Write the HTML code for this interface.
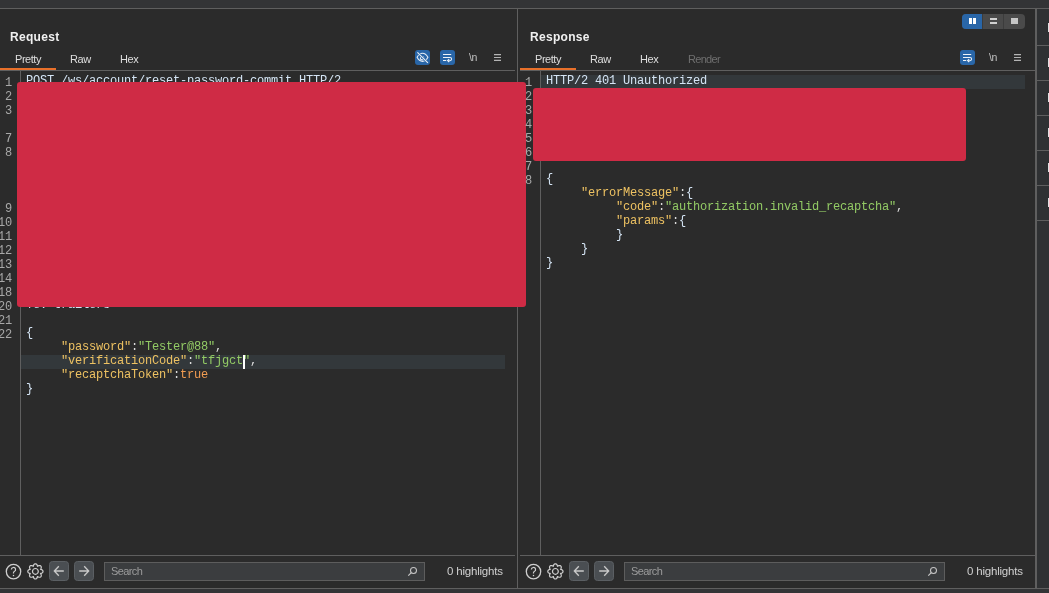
<!DOCTYPE html>
<html><head><meta charset="utf-8">
<style>
*{margin:0;padding:0;box-sizing:border-box}
html,body{width:1049px;height:593px;overflow:hidden;background:#2b2b2b;font-family:"Liberation Sans",sans-serif}
.a{position:absolute}
.title,.tab,.code,.num,.srch,.hl,.nl{will-change:transform}
.ln{background:#5f5f5f}
.panel{position:absolute;top:0;width:515px;height:593px}
.title{position:absolute;left:10px;top:30px;font-weight:bold;font-size:12px;color:#f0f0f0;letter-spacing:0.3px;line-height:14px}
.tab{position:absolute;top:52px;font-size:11px;color:#dedede;letter-spacing:-0.45px;line-height:14px}
.code{position:absolute;left:26px;top:74px;font-family:"Liberation Mono",monospace;font-size:12px;letter-spacing:-0.2px;line-height:14px;white-space:pre;color:#d5e5f5}
.num{position:absolute;right:503px;top:76px;font-family:"Liberation Mono",monospace;font-size:12px;letter-spacing:-0.2px;line-height:14px;white-space:pre;color:#a8a8a8;text-align:right}
.k{color:#eec262}
.s{color:#93cb65}
.t{color:#f19c52}
.p{color:#dcdcdc}
.srch{left:111px;top:565px;font-size:11px;color:#9c9c9c;letter-spacing:-0.6px;line-height:13px}
.hl{left:447px;top:565px;font-size:11.5px;color:#d0d0d0;letter-spacing:-0.2px;line-height:13px}
.nl{font-size:10.5px;color:#c0c0c0;line-height:12px;letter-spacing:-0.5px}
</style></head><body>
<div class="a" style="left:0;top:0;width:1049px;height:8px;background:#333436"></div>
<div class="a ln" style="left:0;top:8px;width:1049px;height:1px"></div>
<div class="a ln" style="left:0;top:588px;width:1049px;height:1px"></div>
<div class="a" style="left:0;top:589px;width:1049px;height:4px;background:#333436"></div>
<div class="a" style="left:1037px;top:9px;width:12px;height:579px;background:#2f3133"></div>
<div class="a ln" style="left:1035px;top:9px;width:2px;height:579px"></div>
<div class="a ln" style="left:1037px;top:45px;width:12px;height:1px"></div>
<div class="a ln" style="left:1037px;top:80px;width:12px;height:1px"></div>
<div class="a ln" style="left:1037px;top:115px;width:12px;height:1px"></div>
<div class="a ln" style="left:1037px;top:150px;width:12px;height:1px"></div>
<div class="a ln" style="left:1037px;top:185px;width:12px;height:1px"></div>
<div class="a ln" style="left:1037px;top:220px;width:12px;height:1px"></div>
<div class="a" style="left:1048px;top:23px;width:1px;height:9px;background:#e0e0e0"></div>
<div class="a" style="left:1048px;top:58px;width:1px;height:9px;background:#e0e0e0"></div>
<div class="a" style="left:1048px;top:93px;width:1px;height:9px;background:#e0e0e0"></div>
<div class="a" style="left:1048px;top:128px;width:1px;height:9px;background:#e0e0e0"></div>
<div class="a" style="left:1048px;top:163px;width:1px;height:9px;background:#e0e0e0"></div>
<div class="a" style="left:1048px;top:198px;width:1px;height:9px;background:#e0e0e0"></div>

<div class="a ln" style="left:517px;top:9px;width:1px;height:579px"></div>

<div class="panel" style="left:0">
  <div class="title">Request</div>
  <div class="tab" style="left:15px">Pretty</div>
  <div class="tab" style="left:70px">Raw</div>
  <div class="tab" style="left:120px">Hex</div>
  <div class="a" style="left:0;top:68px;width:56px;height:2px;background:#e8702a"></div>
  <div class="a ln" style="left:0;top:70px;width:515px;height:1px"></div>
  
  <svg class="a" style="left:415px;top:50px" width="15" height="15" viewBox="0 0 15 15">
    <rect x="0" y="0" width="15" height="15" rx="3" fill="#2966a8"/>
    <path d="M2.1,7.3 C5,1.9 10,1.9 12.9,7.3 C10,12.7 5,12.7 2.1,7.3 Z" fill="none" stroke="#e8eef5" stroke-width="1.1"/>
    <circle cx="7.1" cy="8.2" r="1.7" fill="none" stroke="#e8eef5" stroke-width="1.1"/>
    <path d="M2.4,2.4 L12.9,12.9" stroke="#2966a8" stroke-width="2.2"/>
    <path d="M2.4,2.4 L12.9,12.9" stroke="#e8eef5" stroke-width="1.1"/>
  </svg>
  <svg class="a" style="left:440px;top:50px" width="15" height="15" viewBox="0 0 15 15">
    <rect x="0" y="0" width="15" height="15" rx="3" fill="#2966a8"/>
    <path d="M3,4.5 H11.2 M3,7.5 H10 A1.6,1.6 0 0 1 10,10.7 H8.2 M6.2,10.5 H3" fill="none" stroke="#eef3f8" stroke-width="1.05"/>
    <path d="M9.2,9.2 L7.6,10.6 L9.2,12" fill="none" stroke="#eef3f8" stroke-width="1.1"/>
  </svg>
  <div class="a nl" style="left:469px;top:51px">\n</div>
  <svg class="a" style="left:493px;top:52px" width="10" height="10" viewBox="493 52 10 10">
    <path d="M494,54.6 H501 M494,57.5 H501 M494,60.4 H501" stroke="#b4b4b4" stroke-width="1.1"/>
  </svg>
  <div class="a ln" style="left:20px;top:71px;width:1px;height:484px"></div>
  <div class="a" style="left:21px;top:355px;width:484px;height:14px;background:#33383b"></div>
  <div class="num">1
2
3

7
8



9
10
11
12
13
14
18
20
21
22</div>
  <div class="code">POST /ws/account/reset-password-commit HTTP/2















Te: trailers

{
     <span class="k">"password"</span><span class="p">:</span><span class="s">"Tester@88"</span><span class="p">,</span>
     <span class="k">"verificationCode"</span><span class="p">:</span><span class="s">"tfjgct"</span><span class="p">,</span>
     <span class="k">"recaptchaToken"</span><span class="p">:</span><span class="t">true</span>
}</div>
  <div class="a" style="left:243px;top:355px;width:2px;height:14px;background:#ffffff"></div>
  <div class="a" style="left:17px;top:82px;width:509px;height:225px;border-radius:3px;background:#cf2b45"></div>
  
  <div class="a ln" style="left:0;top:555px;width:515px;height:1px"></div>
  <svg class="a" style="left:0;top:556px" width="100" height="32" viewBox="0 556 100 32">
    <circle cx="13.5" cy="571.6" r="7.2" fill="none" stroke="#cfcfcf" stroke-width="1.3"/>
    <path d="M11.4,569.6 a2.1,2.1 0 1 1 2.9,1.9 c-0.6,0.3 -0.8,0.6 -0.8,1.3 v0.6" fill="none" stroke="#cfcfcf" stroke-width="1.2"/>
    <rect x="12.85" y="574.9" width="1.3" height="1.3" fill="#cfcfcf"/>
    <g transform="translate(35.4,571.4)"><path d="M7.60,0.00 L7.58,0.24 L7.53,0.47 L7.44,0.70 L7.31,0.92 L7.15,1.13 L6.96,1.33 L6.74,1.51 L6.49,1.67 L6.21,1.80 L5.90,1.92 L5.55,2.00 L5.16,2.04 L5.09,2.20 L5.34,2.51 L5.52,2.81 L5.66,3.11 L5.76,3.41 L5.83,3.70 L5.86,3.98 L5.86,4.26 L5.82,4.52 L5.76,4.76 L5.66,4.99 L5.53,5.19 L5.37,5.37 L5.19,5.53 L4.99,5.66 L4.76,5.76 L4.52,5.82 L4.26,5.86 L3.98,5.86 L3.70,5.83 L3.41,5.76 L3.11,5.66 L2.81,5.52 L2.51,5.34 L2.20,5.09 L2.04,5.16 L2.00,5.55 L1.92,5.90 L1.80,6.21 L1.67,6.49 L1.51,6.74 L1.33,6.96 L1.13,7.15 L0.92,7.31 L0.70,7.44 L0.47,7.53 L0.24,7.58 L0.00,7.60 L-0.24,7.58 L-0.47,7.53 L-0.70,7.44 L-0.92,7.31 L-1.13,7.15 L-1.33,6.96 L-1.51,6.74 L-1.67,6.49 L-1.80,6.21 L-1.92,5.90 L-2.00,5.55 L-2.04,5.16 L-2.20,5.09 L-2.51,5.34 L-2.81,5.52 L-3.11,5.66 L-3.41,5.76 L-3.70,5.83 L-3.98,5.86 L-4.26,5.86 L-4.52,5.82 L-4.76,5.76 L-4.99,5.66 L-5.19,5.53 L-5.37,5.37 L-5.53,5.19 L-5.66,4.99 L-5.76,4.76 L-5.82,4.52 L-5.86,4.26 L-5.86,3.98 L-5.83,3.70 L-5.76,3.41 L-5.66,3.11 L-5.52,2.81 L-5.34,2.51 L-5.09,2.20 L-5.16,2.04 L-5.55,2.00 L-5.90,1.92 L-6.21,1.80 L-6.49,1.67 L-6.74,1.51 L-6.96,1.33 L-7.15,1.13 L-7.31,0.92 L-7.44,0.70 L-7.53,0.47 L-7.58,0.24 L-7.60,0.00 L-7.58,-0.24 L-7.53,-0.47 L-7.44,-0.70 L-7.31,-0.92 L-7.15,-1.13 L-6.96,-1.33 L-6.74,-1.51 L-6.49,-1.67 L-6.21,-1.80 L-5.90,-1.92 L-5.55,-2.00 L-5.16,-2.04 L-5.09,-2.20 L-5.34,-2.51 L-5.52,-2.81 L-5.66,-3.11 L-5.76,-3.41 L-5.83,-3.70 L-5.86,-3.98 L-5.86,-4.26 L-5.82,-4.52 L-5.76,-4.76 L-5.66,-4.99 L-5.53,-5.19 L-5.37,-5.37 L-5.19,-5.53 L-4.99,-5.66 L-4.76,-5.76 L-4.52,-5.82 L-4.26,-5.86 L-3.98,-5.86 L-3.70,-5.83 L-3.41,-5.76 L-3.11,-5.66 L-2.81,-5.52 L-2.51,-5.34 L-2.20,-5.09 L-2.04,-5.16 L-2.00,-5.55 L-1.92,-5.90 L-1.80,-6.21 L-1.67,-6.49 L-1.51,-6.74 L-1.33,-6.96 L-1.13,-7.15 L-0.92,-7.31 L-0.70,-7.44 L-0.47,-7.53 L-0.24,-7.58 L-0.00,-7.60 L0.24,-7.58 L0.47,-7.53 L0.70,-7.44 L0.92,-7.31 L1.13,-7.15 L1.33,-6.96 L1.51,-6.74 L1.67,-6.49 L1.80,-6.21 L1.92,-5.90 L2.00,-5.55 L2.04,-5.16 L2.20,-5.09 L2.51,-5.34 L2.81,-5.52 L3.11,-5.66 L3.41,-5.76 L3.70,-5.83 L3.98,-5.86 L4.26,-5.86 L4.52,-5.82 L4.76,-5.76 L4.99,-5.66 L5.19,-5.53 L5.37,-5.37 L5.53,-5.19 L5.66,-4.99 L5.76,-4.76 L5.82,-4.52 L5.86,-4.26 L5.86,-3.98 L5.83,-3.70 L5.76,-3.41 L5.66,-3.11 L5.52,-2.81 L5.34,-2.51 L5.09,-2.20 L5.16,-2.04 L5.55,-2.00 L5.90,-1.92 L6.21,-1.80 L6.49,-1.67 L6.74,-1.51 L6.96,-1.33 L7.15,-1.13 L7.31,-0.92 L7.44,-0.70 L7.53,-0.47 L7.58,-0.24 Z" fill="none" stroke="#cfcfcf" stroke-width="1.2" stroke-linejoin="round"/><circle cx="0" cy="0" r="2.9" fill="none" stroke="#cfcfcf" stroke-width="1.2"/></g>
    <rect x="49.5" y="561.5" width="19" height="19" rx="3" fill="#4a4e52" stroke="#5b5f63" stroke-width="1"/>
    <rect x="74.5" y="561.5" width="19" height="19" rx="3" fill="#4a4e52" stroke="#5b5f63" stroke-width="1"/>
    <path d="M63.8,571 H54.8 M58.8,566.2 L54.3,571 L58.8,575.8" fill="none" stroke="#c9c9c9" stroke-width="1.3"/>
    <path d="M79.2,571 H88.2 M84.2,566.2 L88.7,571 L84.2,575.8" fill="none" stroke="#c9c9c9" stroke-width="1.3"/>
  </svg>
  <div class="a" style="left:104px;top:562px;width:321px;height:19px;background:#3b3d3f;border:1px solid #5d5d5d"></div>
  <svg class="a" style="left:404px;top:563px" width="18" height="17" viewBox="404 563 18 17">
    <circle cx="413.5" cy="570.5" r="3" fill="none" stroke="#c4c4c4" stroke-width="1.05"/>
    <path d="M411.3,572.7 L408.3,575.7" stroke="#c4c4c4" stroke-width="1.2"/>
  </svg>
  <div class="a srch">Search</div>
  <div class="a hl">0 highlights</div>
</div>

<div class="panel" style="left:520px">
  <div class="title">Response</div>
  <div class="tab" style="left:15px">Pretty</div>
  <div class="tab" style="left:70px">Raw</div>
  <div class="tab" style="left:120px">Hex</div>
  <div class="tab" style="left:168px;color:#6f6f6f;letter-spacing:-0.7px">Render</div>
  <div class="a" style="left:0;top:68px;width:56px;height:2px;background:#e8702a"></div>
  <div class="a ln" style="left:0;top:70px;width:515px;height:1px"></div>
  
  <svg class="a" style="left:440px;top:50px" width="15" height="15" viewBox="0 0 15 15">
    <rect x="0" y="0" width="15" height="15" rx="3" fill="#2966a8"/>
    <path d="M3,4.5 H11.2 M3,7.5 H10 A1.6,1.6 0 0 1 10,10.7 H8.2 M6.2,10.5 H3" fill="none" stroke="#eef3f8" stroke-width="1.05"/>
    <path d="M9.2,9.2 L7.6,10.6 L9.2,12" fill="none" stroke="#eef3f8" stroke-width="1.1"/>
  </svg>
  <div class="a nl" style="left:469px;top:51px">\n</div>
  <svg class="a" style="left:493px;top:52px" width="10" height="10" viewBox="493 52 10 10">
    <path d="M494,54.6 H501 M494,57.5 H501 M494,60.4 H501" stroke="#b4b4b4" stroke-width="1.1"/>
  </svg>
  <div class="a ln" style="left:20px;top:71px;width:1px;height:484px"></div>
  <div class="a" style="left:21px;top:75px;width:484px;height:14px;background:#33383b"></div>
  <div class="num">1
2
3
4
5
6
7
8</div>
  <div class="code">HTTP/2 401 Unauthorized






{
     <span class="k">"errorMessage"</span><span class="p">:</span>{
          <span class="k">"code"</span><span class="p">:</span><span class="s">"authorization.invalid_recaptcha"</span><span class="p">,</span>
          <span class="k">"params"</span><span class="p">:</span>{
          }
     }
}</div>
  <div class="a" style="left:13px;top:88px;width:433px;height:73px;border-radius:3px;background:#cf2b45"></div>
  
  <div class="a ln" style="left:0;top:555px;width:515px;height:1px"></div>
  <svg class="a" style="left:0;top:556px" width="100" height="32" viewBox="0 556 100 32">
    <circle cx="13.5" cy="571.6" r="7.2" fill="none" stroke="#cfcfcf" stroke-width="1.3"/>
    <path d="M11.4,569.6 a2.1,2.1 0 1 1 2.9,1.9 c-0.6,0.3 -0.8,0.6 -0.8,1.3 v0.6" fill="none" stroke="#cfcfcf" stroke-width="1.2"/>
    <rect x="12.85" y="574.9" width="1.3" height="1.3" fill="#cfcfcf"/>
    <g transform="translate(35.4,571.4)"><path d="M7.60,0.00 L7.58,0.24 L7.53,0.47 L7.44,0.70 L7.31,0.92 L7.15,1.13 L6.96,1.33 L6.74,1.51 L6.49,1.67 L6.21,1.80 L5.90,1.92 L5.55,2.00 L5.16,2.04 L5.09,2.20 L5.34,2.51 L5.52,2.81 L5.66,3.11 L5.76,3.41 L5.83,3.70 L5.86,3.98 L5.86,4.26 L5.82,4.52 L5.76,4.76 L5.66,4.99 L5.53,5.19 L5.37,5.37 L5.19,5.53 L4.99,5.66 L4.76,5.76 L4.52,5.82 L4.26,5.86 L3.98,5.86 L3.70,5.83 L3.41,5.76 L3.11,5.66 L2.81,5.52 L2.51,5.34 L2.20,5.09 L2.04,5.16 L2.00,5.55 L1.92,5.90 L1.80,6.21 L1.67,6.49 L1.51,6.74 L1.33,6.96 L1.13,7.15 L0.92,7.31 L0.70,7.44 L0.47,7.53 L0.24,7.58 L0.00,7.60 L-0.24,7.58 L-0.47,7.53 L-0.70,7.44 L-0.92,7.31 L-1.13,7.15 L-1.33,6.96 L-1.51,6.74 L-1.67,6.49 L-1.80,6.21 L-1.92,5.90 L-2.00,5.55 L-2.04,5.16 L-2.20,5.09 L-2.51,5.34 L-2.81,5.52 L-3.11,5.66 L-3.41,5.76 L-3.70,5.83 L-3.98,5.86 L-4.26,5.86 L-4.52,5.82 L-4.76,5.76 L-4.99,5.66 L-5.19,5.53 L-5.37,5.37 L-5.53,5.19 L-5.66,4.99 L-5.76,4.76 L-5.82,4.52 L-5.86,4.26 L-5.86,3.98 L-5.83,3.70 L-5.76,3.41 L-5.66,3.11 L-5.52,2.81 L-5.34,2.51 L-5.09,2.20 L-5.16,2.04 L-5.55,2.00 L-5.90,1.92 L-6.21,1.80 L-6.49,1.67 L-6.74,1.51 L-6.96,1.33 L-7.15,1.13 L-7.31,0.92 L-7.44,0.70 L-7.53,0.47 L-7.58,0.24 L-7.60,0.00 L-7.58,-0.24 L-7.53,-0.47 L-7.44,-0.70 L-7.31,-0.92 L-7.15,-1.13 L-6.96,-1.33 L-6.74,-1.51 L-6.49,-1.67 L-6.21,-1.80 L-5.90,-1.92 L-5.55,-2.00 L-5.16,-2.04 L-5.09,-2.20 L-5.34,-2.51 L-5.52,-2.81 L-5.66,-3.11 L-5.76,-3.41 L-5.83,-3.70 L-5.86,-3.98 L-5.86,-4.26 L-5.82,-4.52 L-5.76,-4.76 L-5.66,-4.99 L-5.53,-5.19 L-5.37,-5.37 L-5.19,-5.53 L-4.99,-5.66 L-4.76,-5.76 L-4.52,-5.82 L-4.26,-5.86 L-3.98,-5.86 L-3.70,-5.83 L-3.41,-5.76 L-3.11,-5.66 L-2.81,-5.52 L-2.51,-5.34 L-2.20,-5.09 L-2.04,-5.16 L-2.00,-5.55 L-1.92,-5.90 L-1.80,-6.21 L-1.67,-6.49 L-1.51,-6.74 L-1.33,-6.96 L-1.13,-7.15 L-0.92,-7.31 L-0.70,-7.44 L-0.47,-7.53 L-0.24,-7.58 L-0.00,-7.60 L0.24,-7.58 L0.47,-7.53 L0.70,-7.44 L0.92,-7.31 L1.13,-7.15 L1.33,-6.96 L1.51,-6.74 L1.67,-6.49 L1.80,-6.21 L1.92,-5.90 L2.00,-5.55 L2.04,-5.16 L2.20,-5.09 L2.51,-5.34 L2.81,-5.52 L3.11,-5.66 L3.41,-5.76 L3.70,-5.83 L3.98,-5.86 L4.26,-5.86 L4.52,-5.82 L4.76,-5.76 L4.99,-5.66 L5.19,-5.53 L5.37,-5.37 L5.53,-5.19 L5.66,-4.99 L5.76,-4.76 L5.82,-4.52 L5.86,-4.26 L5.86,-3.98 L5.83,-3.70 L5.76,-3.41 L5.66,-3.11 L5.52,-2.81 L5.34,-2.51 L5.09,-2.20 L5.16,-2.04 L5.55,-2.00 L5.90,-1.92 L6.21,-1.80 L6.49,-1.67 L6.74,-1.51 L6.96,-1.33 L7.15,-1.13 L7.31,-0.92 L7.44,-0.70 L7.53,-0.47 L7.58,-0.24 Z" fill="none" stroke="#cfcfcf" stroke-width="1.2" stroke-linejoin="round"/><circle cx="0" cy="0" r="2.9" fill="none" stroke="#cfcfcf" stroke-width="1.2"/></g>
    <rect x="49.5" y="561.5" width="19" height="19" rx="3" fill="#4a4e52" stroke="#5b5f63" stroke-width="1"/>
    <rect x="74.5" y="561.5" width="19" height="19" rx="3" fill="#4a4e52" stroke="#5b5f63" stroke-width="1"/>
    <path d="M63.8,571 H54.8 M58.8,566.2 L54.3,571 L58.8,575.8" fill="none" stroke="#c9c9c9" stroke-width="1.3"/>
    <path d="M79.2,571 H88.2 M84.2,566.2 L88.7,571 L84.2,575.8" fill="none" stroke="#c9c9c9" stroke-width="1.3"/>
  </svg>
  <div class="a" style="left:104px;top:562px;width:321px;height:19px;background:#3b3d3f;border:1px solid #5d5d5d"></div>
  <svg class="a" style="left:404px;top:563px" width="18" height="17" viewBox="404 563 18 17">
    <circle cx="413.5" cy="570.5" r="3" fill="none" stroke="#c4c4c4" stroke-width="1.05"/>
    <path d="M411.3,572.7 L408.3,575.7" stroke="#c4c4c4" stroke-width="1.2"/>
  </svg>
  <div class="a srch">Search</div>
  <div class="a hl">0 highlights</div>
</div>

<div class="a" style="left:962px;top:14px;width:63px;height:15px;border-radius:4px;background:#4a4a4a;overflow:hidden">
  <div class="a" style="left:0;top:0;width:20px;height:15px;background:#2966a8"></div>
  <div class="a" style="left:20px;top:0;width:1px;height:15px;background:#3c3c3c"></div>
  <div class="a" style="left:41px;top:0;width:1px;height:15px;background:#3c3c3c"></div>
  <div class="a" style="left:7px;top:4px;width:2.5px;height:6px;background:#ffffff"></div>
  <div class="a" style="left:11.2px;top:4px;width:2.8px;height:6px;background:#ffffff"></div>
  <div class="a" style="left:28px;top:4px;width:7px;height:2px;background:#d0d0d0"></div>
  <div class="a" style="left:28px;top:8px;width:7px;height:2px;background:#d0d0d0"></div>
  <div class="a" style="left:49px;top:4px;width:7px;height:6px;background:#c6c6c6"></div>
</div>
</body></html>
